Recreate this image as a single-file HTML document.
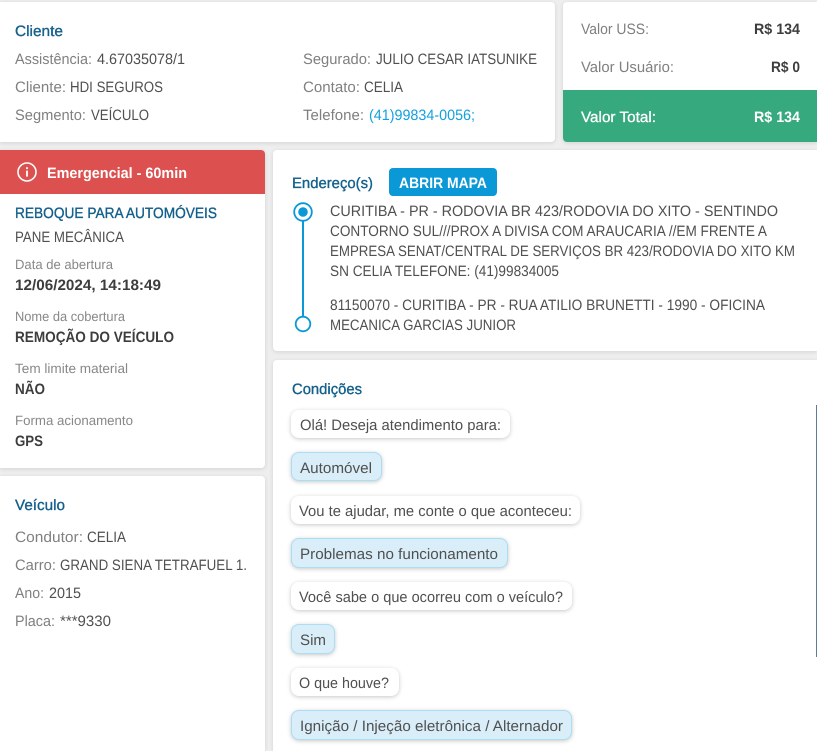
<!DOCTYPE html>
<html lang="pt"><head><meta charset="utf-8"><title>Atendimento</title>
<style>
html,body{margin:0;padding:0;width:817px;height:751px;overflow:hidden;background:#eeeeee}
#p{position:absolute;left:0;top:0;width:817px;height:751px;overflow:hidden;background:#eeeeee}
.c{position:absolute;background:#fff;border-radius:4px;box-shadow:0 1px 4px rgba(0,0,0,.12)}
.b{position:absolute;left:291px;background:#fff;border-radius:8px;box-shadow:0 1px 4px rgba(0,0,0,.22)}
.a{background:#d9eef8;border:1px solid #a9def3;box-sizing:border-box}
svg{position:absolute;left:0;top:0;display:block}
text{font-family:"Liberation Sans",sans-serif;font-size:15px;fill:#505050;text-rendering:geometricPrecision}
.l{fill:#808080}
.h{fill:#13608c;stroke:#13608c;stroke-width:.35px}
.s{font-size:13.5px;fill:#888888}
.w{font-weight:700;fill:#3d3d3d}
.t{fill:#fff;font-weight:700}
</style></head><body><div id="p">
<div class="c" style="left:0;top:2px;width:555px;height:140px;border-radius:0 4px 4px 0"></div>
<div class="c" style="left:563px;top:2px;width:254px;height:140px;overflow:hidden;border-radius:4px 0 0 4px"><div style="position:absolute;left:0;top:88px;width:254px;height:52px;background:#36a97f"></div></div>
<div class="c" style="left:0;top:150px;width:265px;height:318px;overflow:hidden;border-radius:0 4px 4px 0"><div style="height:44px;background:#dc5050"></div></div>
<div class="c" style="left:0;top:476px;width:265px;height:275px;border-radius:0 4px 0 0"></div>
<div class="c" style="left:273px;top:150px;width:544px;height:201px;border-radius:4px 0 0 4px"></div>
<div class="c" style="left:273px;top:360px;width:544px;height:391px;border-radius:4px 0 0 0"></div>
<div style="position:absolute;left:389px;top:168px;width:108px;height:28px;background:#0b98d6;border-radius:4px"></div>
<div class="b" style="top:410px;width:219px;height:28px"></div>
<div class="b a" style="top:452px;width:91px;height:29px"></div>
<div class="b" style="top:496px;width:289px;height:28px"></div>
<div class="b a" style="top:538px;width:217px;height:30px"></div>
<div class="b" style="top:582px;width:281px;height:28px"></div>
<div class="b a" style="top:624px;width:44px;height:30px"></div>
<div class="b" style="top:668px;width:108px;height:28px"></div>
<div class="b a" style="top:710px;width:281px;height:30px"></div>
<div style="position:absolute;left:816px;top:405px;width:1px;height:252px;background:#5f7a9a"></div>
<svg width="817" height="751" viewBox="0 0 817 751" xmlns="http://www.w3.org/2000/svg">
<text class="h" x="15" y="36" textLength="48" lengthAdjust="spacingAndGlyphs">Cliente</text>
<text class="l" x="15" y="64" textLength="77" lengthAdjust="spacingAndGlyphs">Assistência:</text>
<text x="97" y="64" textLength="88" lengthAdjust="spacingAndGlyphs">4.67035078/1</text>
<text class="l" x="15" y="92" textLength="51" lengthAdjust="spacingAndGlyphs">Cliente:</text>
<text x="70" y="92" textLength="93" lengthAdjust="spacingAndGlyphs">HDI SEGUROS</text>
<text class="l" x="15" y="120" textLength="71" lengthAdjust="spacingAndGlyphs">Segmento:</text>
<text x="91" y="120" textLength="58" lengthAdjust="spacingAndGlyphs">VEÍCULO</text>
<text class="l" x="303" y="64" textLength="68" lengthAdjust="spacingAndGlyphs">Segurado:</text>
<text x="376" y="64" textLength="161" lengthAdjust="spacingAndGlyphs">JULIO CESAR IATSUNIKE</text>
<text class="l" x="303" y="92" textLength="57" lengthAdjust="spacingAndGlyphs">Contato:</text>
<text x="364" y="92" textLength="39" lengthAdjust="spacingAndGlyphs">CELIA</text>
<text class="l" x="303" y="120" textLength="61" lengthAdjust="spacingAndGlyphs">Telefone:</text>
<text style="fill:#14a0e0" x="369" y="120" textLength="106" lengthAdjust="spacingAndGlyphs">(41)99834-0056;</text>

<text class="l" x="581" y="34" textLength="68" lengthAdjust="spacingAndGlyphs">Valor USS:</text>
<text class="w" x="754" y="34" textLength="46" lengthAdjust="spacingAndGlyphs">R$ 134</text>
<text class="l" x="581" y="72" textLength="93" lengthAdjust="spacingAndGlyphs">Valor Usuário:</text>
<text class="w" x="771" y="72" textLength="29" lengthAdjust="spacingAndGlyphs">R$ 0</text>
<text style="fill:#fff;stroke:#fff;stroke-width:.3px" x="581" y="122" textLength="75" lengthAdjust="spacingAndGlyphs">Valor Total:</text>
<text class="t" x="754" y="122" textLength="46" lengthAdjust="spacingAndGlyphs">R$ 134</text>

<circle cx="27" cy="172" r="9" fill="none" stroke="#fff" stroke-width="1.6"/>
<rect x="26.1" y="170.6" width="1.8" height="6" fill="#fff"/>
<rect x="26.1" y="167.2" width="1.8" height="1.9" fill="#fff"/>
<text class="t" x="47" y="178" textLength="140" lengthAdjust="spacingAndGlyphs">Emergencial - 60min</text>

<text class="h" x="15" y="218" textLength="202" lengthAdjust="spacingAndGlyphs">REBOQUE PARA AUTOMÓVEIS</text>
<text x="15" y="242" textLength="109" lengthAdjust="spacingAndGlyphs">PANE MECÂNICA</text>
<text class="s" x="15" y="269" textLength="98" lengthAdjust="spacingAndGlyphs">Data de abertura</text>
<text class="w" x="15" y="290" textLength="146" lengthAdjust="spacingAndGlyphs">12/06/2024, 14:18:49</text>
<text class="s" x="15" y="321" textLength="110" lengthAdjust="spacingAndGlyphs">Nome da cobertura</text>
<text class="w" x="15" y="342" textLength="159" lengthAdjust="spacingAndGlyphs">REMOÇÃO DO VEÍCULO</text>
<text class="s" x="15" y="373" textLength="113" lengthAdjust="spacingAndGlyphs">Tem limite material</text>
<text class="w" x="15" y="394" textLength="30" lengthAdjust="spacingAndGlyphs">NÃO</text>
<text class="s" x="15" y="425" textLength="118" lengthAdjust="spacingAndGlyphs">Forma acionamento</text>
<text class="w" x="15" y="446" textLength="28" lengthAdjust="spacingAndGlyphs">GPS</text>

<text class="h" x="15" y="510" textLength="50" lengthAdjust="spacingAndGlyphs">Veículo</text>
<text class="l" x="15" y="542" textLength="68" lengthAdjust="spacingAndGlyphs">Condutor:</text>
<text x="87" y="542" textLength="39" lengthAdjust="spacingAndGlyphs">CELIA</text>
<text class="l" x="15" y="570" textLength="41" lengthAdjust="spacingAndGlyphs">Carro:</text>
<text x="60" y="570" textLength="187" lengthAdjust="spacingAndGlyphs">GRAND SIENA TETRAFUEL 1.</text>
<text class="l" x="15" y="598" textLength="29" lengthAdjust="spacingAndGlyphs">Ano:</text>
<text x="49" y="598" textLength="32" lengthAdjust="spacingAndGlyphs">2015</text>
<text class="l" x="15" y="626" textLength="40" lengthAdjust="spacingAndGlyphs">Placa:</text>
<text x="60" y="626" textLength="51" lengthAdjust="spacingAndGlyphs">***9330</text>

<text class="h" x="292" y="188" textLength="81" lengthAdjust="spacingAndGlyphs">Endereço(s)</text>
<text class="t" x="399" y="188" textLength="88" lengthAdjust="spacingAndGlyphs">ABRIR MAPA</text>
<line x1="303" y1="212" x2="303" y2="317" stroke="#0b98d6" stroke-width="2"/>
<circle cx="303" cy="212" r="8.8" fill="#fff" stroke="#0b98d6" stroke-width="1.8"/>
<circle cx="303" cy="212" r="4.8" fill="#0b98d6"/>
<circle cx="303" cy="324" r="7.3" fill="#fff" stroke="#0b98d6" stroke-width="1.8"/>
<text x="330" y="216" textLength="448" lengthAdjust="spacingAndGlyphs">CURITIBA - PR - RODOVIA BR 423/RODOVIA DO XITO - SENTINDO</text>
<text x="330" y="236" textLength="437" lengthAdjust="spacingAndGlyphs">CONTORNO SUL///PROX A DIVISA COM ARAUCARIA //EM FRENTE A</text>
<text x="330" y="256" textLength="465" lengthAdjust="spacingAndGlyphs">EMPRESA SENAT/CENTRAL DE SERVIÇOS BR 423/RODOVIA DO XITO KM</text>
<text x="330" y="276" textLength="229" lengthAdjust="spacingAndGlyphs">SN CELIA TELEFONE: (41)99834005</text>
<text x="330" y="310" textLength="435" lengthAdjust="spacingAndGlyphs">81150070 - CURITIBA - PR - RUA ATILIO BRUNETTI - 1990 - OFICINA</text>
<text x="330" y="330" textLength="186" lengthAdjust="spacingAndGlyphs">MECANICA GARCIAS JUNIOR</text>

<text class="h" x="292" y="394" textLength="70" lengthAdjust="spacingAndGlyphs">Condições</text>
<text x="300" y="430" textLength="201" lengthAdjust="spacingAndGlyphs">Olá! Deseja atendimento para:</text>
<text x="300" y="473" textLength="72" lengthAdjust="spacingAndGlyphs">Automóvel</text>
<text x="299" y="516" textLength="273" lengthAdjust="spacingAndGlyphs">Vou te ajudar, me conte o que aconteceu:</text>
<text x="300" y="559" textLength="198" lengthAdjust="spacingAndGlyphs">Problemas no funcionamento</text>
<text x="299" y="602" textLength="264" lengthAdjust="spacingAndGlyphs">Você sabe o que ocorreu com o veículo?</text>
<text x="300" y="645" textLength="26" lengthAdjust="spacingAndGlyphs">Sim</text>
<text x="299" y="688" textLength="90" lengthAdjust="spacingAndGlyphs">O que houve?</text>
<text x="300" y="731" textLength="263" lengthAdjust="spacingAndGlyphs">Ignição / Injeção eletrônica / Alternador</text>
</svg>
</div></body></html>
